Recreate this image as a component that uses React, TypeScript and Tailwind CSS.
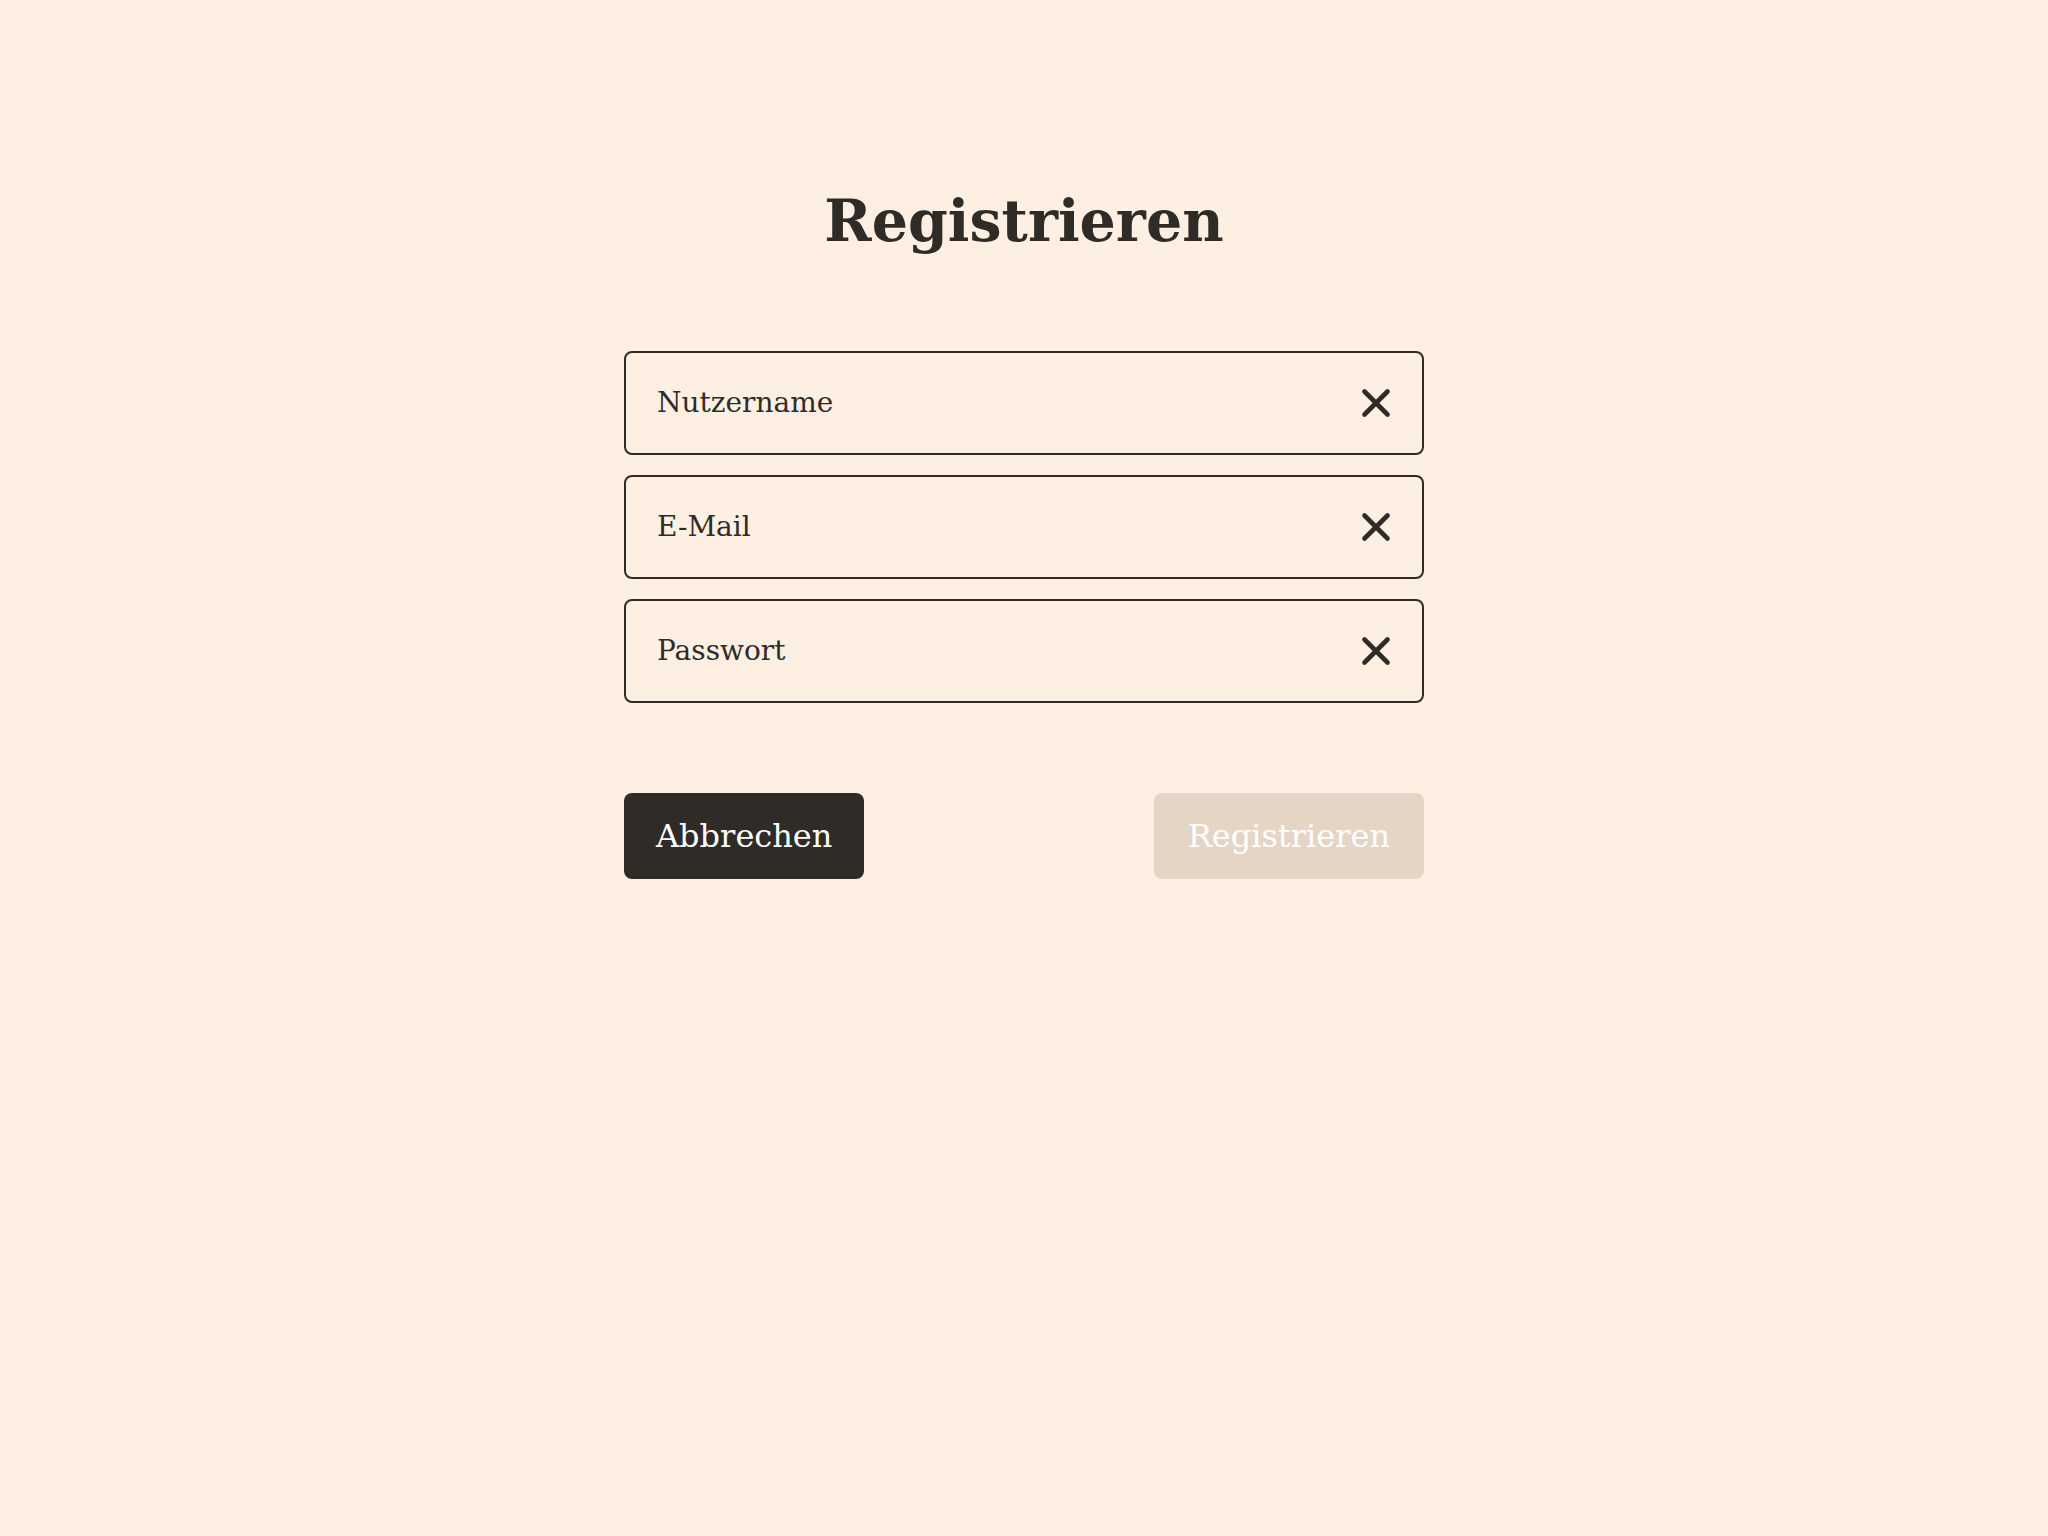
import { X } from 'lucide-react'

const fields = ['Nutzername', 'E-Mail', 'Passwort']

function Field({ label }: { label: string }) {
  return (
    <div className="flex h-[104px] items-center rounded-lg border-2 border-[#2f2c28] pl-[31px] pr-[23px]">
      <input
        placeholder={label}
        className="min-w-0 flex-1 bg-transparent text-[28px] text-[#2f2c28] outline-none placeholder:text-[#2f2c28]"
      />
      <X size={46} strokeWidth={2.4} className="text-[#2f2c28]" />
    </div>
  )
}

export default function App() {
  return (
    <div
      className="min-h-screen bg-[#fdf0e3] pt-[192px]"
      style={{ fontFamily: '"DejaVu Serif", "Liberation Serif", serif' }}
    >
      <h1 className="text-center text-[57px] font-bold leading-none text-[#2f2c28]">Registrieren</h1>

      <div className="mx-auto mt-[102px] w-[800px]">
        <div className="flex flex-col gap-5">
          {fields.map((f) => (
            <Field key={f} label={f} />
          ))}
        </div>

        <div className="mt-[90px] flex justify-between">
          <button className="h-[86px] rounded-lg bg-[#2f2c28] px-8 text-[32px] text-white">Abbrechen</button>
          <button disabled className="h-[86px] rounded-lg bg-[#e5d5c5] px-[34px] text-[32px] text-white">
            Registrieren
          </button>
        </div>
      </div>
    </div>
  )
}
